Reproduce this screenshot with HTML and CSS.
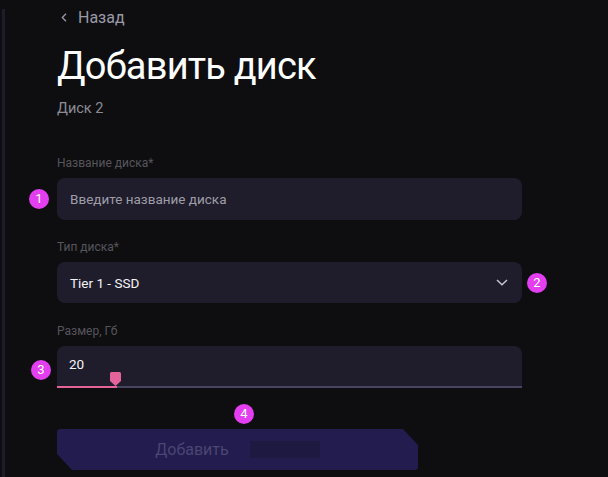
FILE: index.html
```html
<!DOCTYPE html>
<html lang="ru">
<head>
<meta charset="utf-8">
<link rel="stylesheet" href="styles.css">
</head>
<body>
<div class="page">
  <div class="rail"></div>
  <main class="content">
    <a class="back" href="#">
      <svg class="back-icon" width="6" height="9" viewBox="0 0 6 9"><path d="M5 0.8 L1.3 4.5 L5 8.2" fill="none" stroke="#9a9aa6" stroke-width="1.3"/></svg>
      <span>Назад</span>
    </a>
    <h1 class="title">Добавить диск</h1>
    <div class="subtitle">Диск 2</div>

    <div class="field field-first">
      <div class="label">Название диска*</div>
      <div class="box input">
        <span class="placeholder">Введите название диска</span>
        <span class="badge b1">1</span>
      </div>
    </div>

    <div class="field">
      <div class="label">Тип диска*</div>
      <div class="box select">
        <span class="value">Tier 1 - SSD</span>
        <svg class="chev" width="12" height="7" viewBox="0 0 12 7"><path d="M1 1 L6 5.8 L11 1" fill="none" stroke="#c9c8d2" stroke-width="1.4"/></svg>
        <span class="badge b2">2</span>
      </div>
    </div>

    <div class="field field-size">
      <div class="label">Размер, Гб</div>
      <div class="box slider">
        <span class="value">20</span>
        <span class="fill" style="width:60px"></span>
        <svg class="thumb" width="11" height="14" viewBox="0 0 11 14"><path d="M1.5 0 H9.5 A1.5 1.5 0 0 1 11 1.5 V9 L5.5 14 L0 9 V1.5 A1.5 1.5 0 0 1 1.5 0 Z" fill="#e4649a"/></svg>
        <span class="badge b3">3</span>
      </div>
    </div>

    <div class="actions">
      <button class="submit" type="button">
        <span>Добавить</span>
        <span class="spinner"></span>
      </button>
      <span class="badge b4">4</span>
    </div>
  </main>
</div>
</body>
</html>
```

FILE: styles.css
```css
html, body {
  margin: 0;
  padding: 0;
  background: #0e0e11;
  height: 100%;
}
body {
  font-family: Roboto, "Noto Sans", sans-serif;
  color: #fff;
  overflow: hidden;
}
.page {
  display: flex;
  min-height: 100%;
}
.rail {
  margin-left: 2px;
  margin-top: 9px;
  width: 3px;
  background: #1d1b2c;
  flex: none;
}
.content {
  padding-left: 52px;
  width: 465px;
  display: flex;
  flex-direction: column;
}
.back {
  display: flex;
  align-items: center;
  gap: 11px;
  height: 20px;
  margin-top: 7px;
  padding-left: 4px;
  color: #9a9aa6;
  text-decoration: none;
  font-size: 16px;
}
.title {
  margin: 17px 0 0;
  font-size: 38px;
  line-height: 44px;
  font-weight: 400;
  letter-spacing: -0.8px;
}
.subtitle {
  margin-top: 12px;
  font-size: 14.5px;
  line-height: 18px;
  color: #8c8b95;
}
.field {
  display: flex;
  flex-direction: column;
  margin-top: 20px;
}
.field-first {
  margin-top: 38px;
}
.field-size {
  margin-top: 21px;
}
.label {
  font-size: 12px;
  line-height: 14px;
  color: #56555c;
  margin-bottom: 8px;
}
.box {
  position: relative;
  background: #1f1d2b;
  border-radius: 8px;
  height: 42px;
  display: flex;
  align-items: center;
  padding: 0 13px;
  box-sizing: border-box;
}
.select {
  height: 41px;
}
.placeholder {
  font-size: 13.5px;
  color: #9e9ca7;
}
.value {
  font-size: 13.5px;
  color: #f4f4f8;
}
.chev {
  margin-left: auto;
  margin-right: 1px;
}
.slider {
  height: 42px;
  border-radius: 8px 8px 0 0;
  border-bottom: 2px solid #48435e;
  padding-left: 12px;
  padding-bottom: 4px;
}
.fill {
  position: absolute;
  left: 0;
  bottom: -2px;
  height: 2px;
  background: #e4649a;
}
.thumb {
  position: absolute;
  left: 53px;
  top: 26px;
}
.actions {
  position: relative;
  margin-top: 41px;
}
.submit {
  width: 361px;
  height: 41px;
  border: 0;
  padding: 0;
  background: #221c4f;
  color: #4a4571;
  font-family: Roboto, "Noto Sans", sans-serif;
  font-size: 16px;
  display: flex;
  align-items: center;
  justify-content: center;
  gap: 21px;
  clip-path: polygon(0 2px, 2px 0, 346px 0, 361px 16px, 361px 39px, 359px 41px, 15px 41px, 0 25px);
}
.spinner {
  width: 70px;
  height: 17px;
  background: #1d1941;
}
.badge {
  position: absolute;
  width: 20px;
  height: 20px;
  border-radius: 50%;
  background: #e33ff0;
  color: #fff;
  font-size: 13px;
  line-height: 20px;
  text-align: center;
}
.b1 { left: -28px; top: 11px; }
.b2 { right: -25px; top: 11px; }
.b3 { left: -26px; top: 14px; }
.b4 { left: 177px; top: -25px; }
```
